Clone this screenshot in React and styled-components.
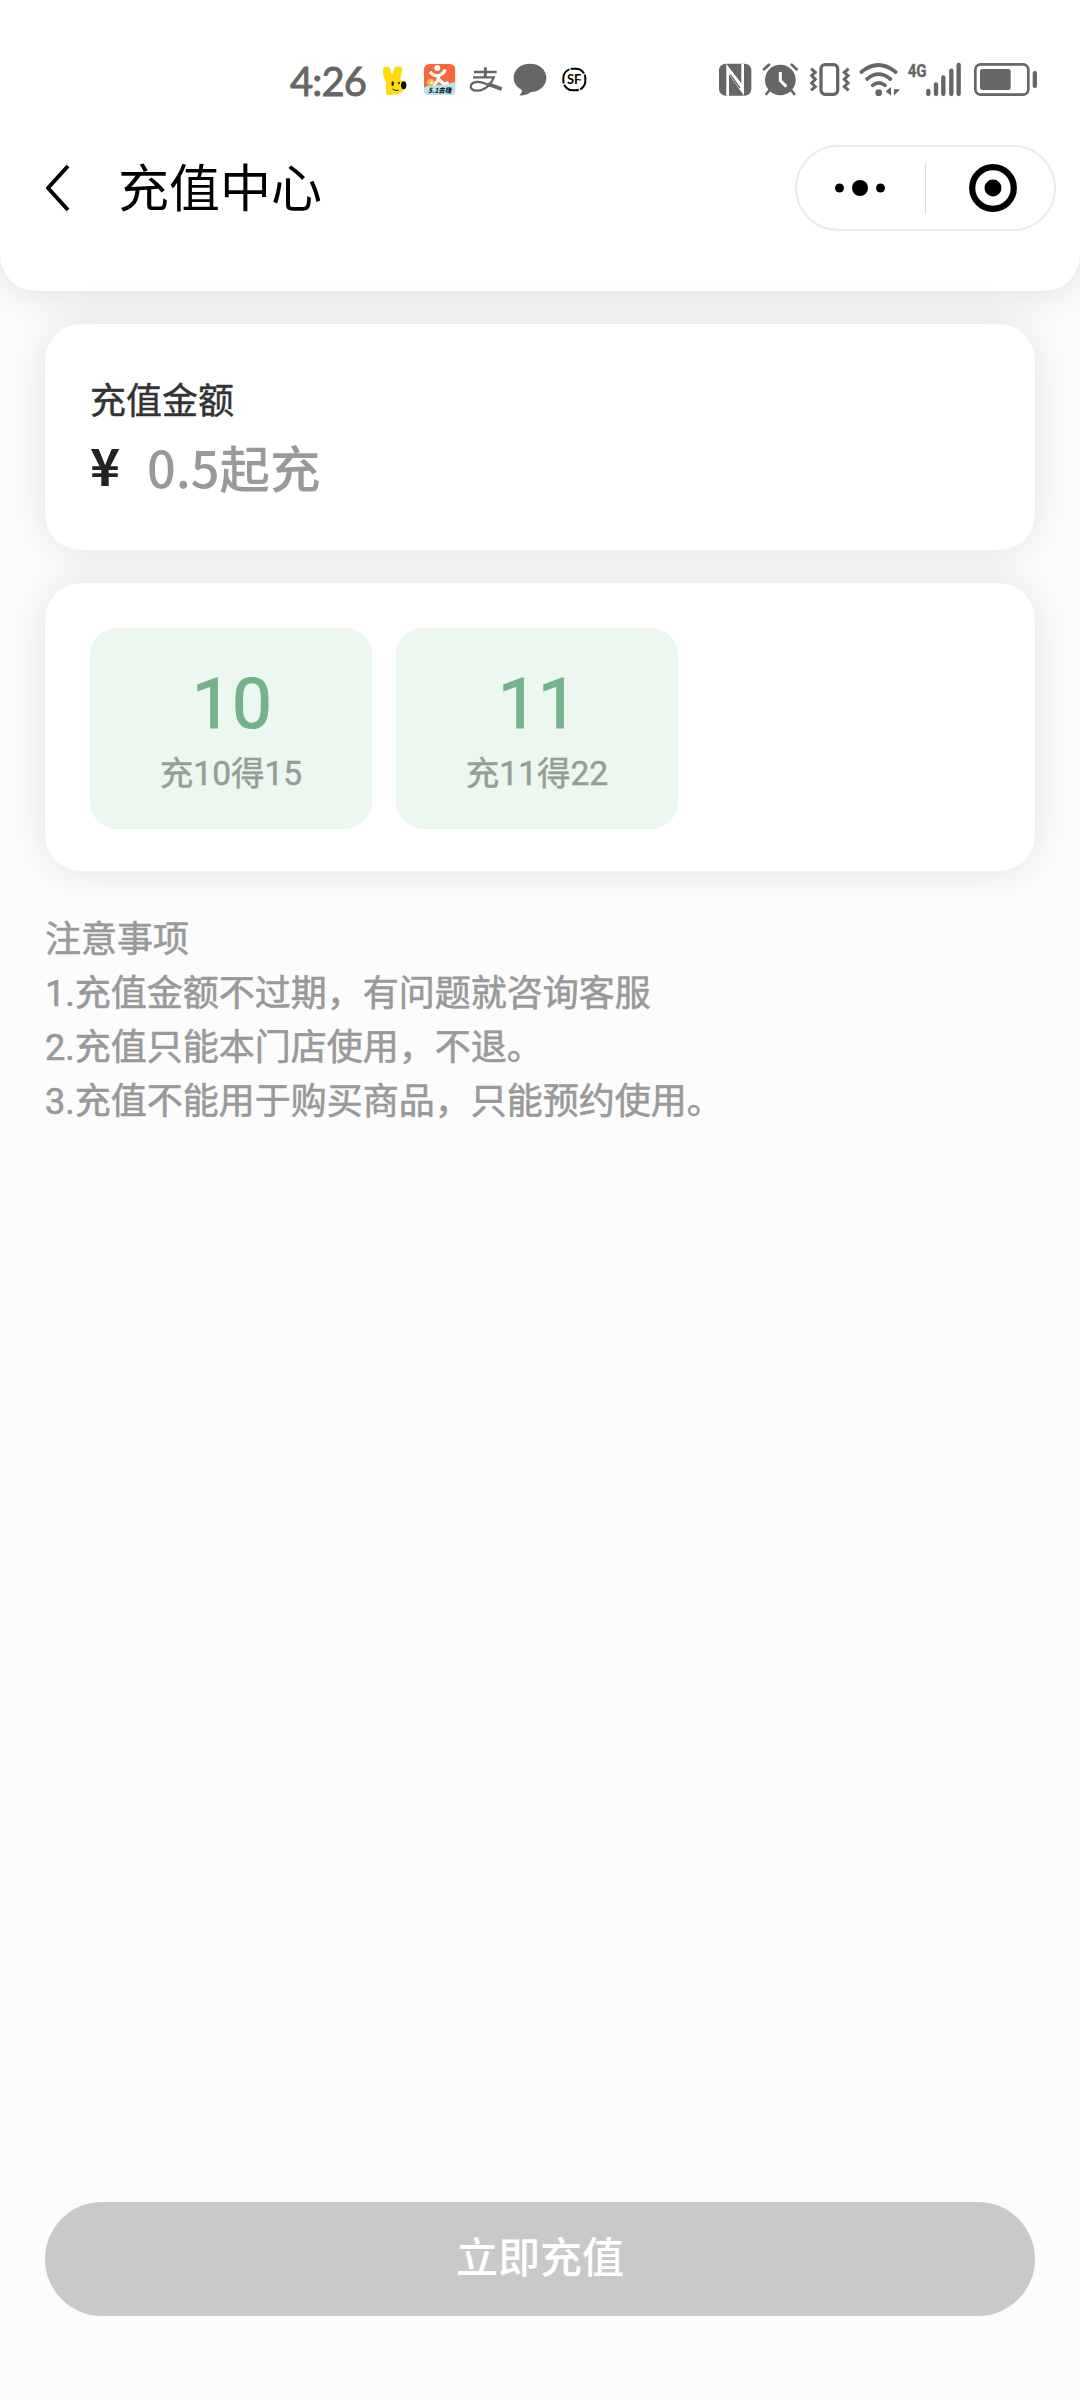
import React from 'react';
import styled, { createGlobalStyle } from 'styled-components';

const GlobalStyle = createGlobalStyle`
  * {
    box-sizing: border-box;
  }

  body {
    margin: 0;
    background: #fcfcfc;
    font-family: 'Noto Sans CJK SC', sans-serif;
  }
`;

const Page = styled.div`
  display: flex;
  flex-direction: column;
  width: 1080px;
  height: 2400px;
  overflow: hidden;
`;

const Header = styled.header`
  height: 291px;
  flex-shrink: 0;
  background: #fff;
  border-radius: 0 0 36px 36px;
  box-shadow: 0 0 45px rgba(0, 0, 0, 0.13);
`;

const StatusBar = styled.div`
  display: flex;
  align-items: flex-start;
  height: 145px;
  padding: 62px 42px 0 290px;
`;

const Time = styled.span`
  width: 92px;
  font-family: Lato, sans-serif;
  font-size: 40px;
  line-height: 38px;
  letter-spacing: -0.9px;
  color: #666;
  -webkit-text-stroke: 0.9px #666;
`;

const StatusIcon = styled.svg`
  flex-shrink: 0;
  height: 34px;
  overflow: visible;
`;

const NavBar = styled.div`
  display: flex;
  align-items: center;
  height: 86px;
  padding: 0 24px 0 42px;
`;

const Title = styled.h1`
  margin: 0 auto 0 44px;
  padding-bottom: 7px;
  font-size: 51px;
  line-height: 72px;
  font-weight: 400;
  color: #000;
`;

const Capsule = styled.div`
  display: flex;
  align-items: center;
  width: 261px;
  height: 86px;
  border: 2px solid #ebebeb;
  border-radius: 43px;
`;

const CapsuleButton = styled.button`
  display: flex;
  flex: ${(props) => props.$width ? `0 0 ${props.$width}px` : 1};
  align-items: center;
  justify-content: center;
  padding: ${(props) => props.$padding || 0};
  border: 0;
  background: none;
`;

const Divider = styled.span`
  width: 1px;
  height: 51px;
  background: #dcdcdc;
`;

const Main = styled.main`
  display: flex;
  flex: 1;
  flex-direction: column;
  padding: 33px 45px 84px;
`;

const Card = styled.section`
  height: ${(props) => props.$height}px;
  margin-bottom: 33px;
  padding: 45px;
  background: #fff;
  border-radius: 36px;
  box-shadow: 0 0 45px rgba(0, 0, 0, 0.1);
`;

const Label = styled.div`
  padding-top: 2px;
  font-size: 36px;
  line-height: 54px;
  font-weight: 400;
  color: #333;
  -webkit-text-stroke: 0.5px #333;
`;

const AmountRow = styled.div`
  display: flex;
  align-items: center;
  height: 82px;
`;

const Currency = styled.span`
  width: 57px;
  padding-bottom: 5px;
  font-size: 51px;
  line-height: 72px;
  font-weight: 700;
  color: #222;
`;

const Placeholder = styled.span`
  font-size: 50.5px;
  line-height: 72px;
  font-weight: 500;
  color: #999;
`;

const Options = styled.div`
  display: flex;
  gap: 24px;
`;

const Option = styled.div`
  display: flex;
  flex-direction: column;
  align-items: center;
  width: 282px;
  height: 201px;
  padding-top: 37px;
  background: #ecf7f0;
  border-radius: 27px;
  font-family: Roboto, 'Noto Sans CJK SC', sans-serif;
`;

const OptionValue = styled.span`
  padding-left: 2px;
  font-size: 71px;
  line-height: 78px;
  font-weight: 400;
  color: #74b28b;
  -webkit-text-stroke: 1.2px #74b28b;
`;

const OptionHint = styled.span`
  padding-top: 7px;
  font-size: 33.5px;
  line-height: 48px;
  font-weight: 400;
  color: #949e97;
  -webkit-text-stroke: 0.5px #949e97;
`;

const Notes = styled.div`
  padding-top: 9px;
  font-family: Roboto, 'Noto Sans CJK SC', sans-serif;
  font-size: 36px;
  line-height: 54px;
  font-weight: 400;
  color: #999;
  -webkit-text-stroke: 0.6px #999;
`;

const SubmitButton = styled.button`
  height: 114px;
  margin-top: auto;
  padding: 0 0 9px;
  border: 0;
  border-radius: 57px;
  background: #c9c9c9;
  color: #fff;
  font-family: inherit;
  font-size: 42px;
  font-weight: 500;
`;

const options = [
  { value: 10, hint: '充10得15' },
  { value: 11, hint: '充11得22' },
];

const notes = [
  '注意事项',
  '1.充值金额不过期，有问题就咨询客服',
  '2.充值只能本门店使用，不退。',
  '3.充值不能用于购买商品，只能预约使用。',
];

const RabbitIcon = () => (
  <StatusIcon width="25" viewBox="336 66 75 102">
    <path
      d="M349 165 L347 124 C342 112 336 96 340 86 C344 78 356 77 361 86 L366 104 L373 86 C377 76 397 76 397 88 L391 119 C398 122 405 132 404 145 C401 158 380 166 349 165Z"
      fill="#fddc0b"
    />
    <ellipse cx="401" cy="136" rx="8" ry="12" fill="#111" />
    <ellipse cx="368" cy="131" rx="3.5" ry="7" fill="#111" />
    <ellipse cx="387" cy="129" rx="2.5" ry="4" fill="#111" />
    <path d="M368 147 Q376 154 385 151" fill="none" stroke="#111" strokeWidth="3" />
  </StatusIcon>
);

const ReviewIcon = () => (
  <StatusIcon width="33" viewBox="459 66 99 102">
    <defs>
      <clipPath id="review">
        <rect x="462" y="72" width="94" height="93" rx="16" />
      </clipPath>
    </defs>
    <g clipPath="url(#review)">
      <rect x="462" y="72" width="94" height="93" fill="#f4683c" />
      <circle cx="502" cy="84" r="9" fill="#fff" />
      <path
        d="M480 95 Q490 108 505 107 Q519 104 526 88 M506 106 L504 121 L489 137 M507 119 L522 132 L536 128"
        fill="none"
        stroke="#fff"
        strokeWidth="10"
        strokeLinejoin="round"
      />
      <path d="M462 143 Q475 134 490 138 Q510 131 530 136 Q545 123 556 128 V165 H462Z" fill="#b9e3ed" />
      <circle cx="482" cy="127" r="11" fill="#f2bd55" />
      <circle cx="486" cy="128" r="4" fill="#fff0a0" />
      <text x="475" y="158" fontSize="21" fontWeight="900" fontStyle="italic" textLength="68" lengthAdjust="spacingAndGlyphs" fill="#12261c">
        5.1去嗨
      </text>
    </g>
  </StatusIcon>
);

const PayIcon = () => (
  <StatusIcon width="34" viewBox="597 66 102 102" fill="none" stroke="#666">
    <path d="M612 96 H680 M609 112 H675" strokeWidth="7" />
    <path d="M646 82 V112" strokeWidth="9" />
    <path d="M671 112 C664 132 646 151 622 152 C606 152 600 145 603 136 C607 124 628 123 646 131 L694 148" strokeWidth="7" />
    <path d="M654 132 L695 147" strokeWidth="11" />
  </StatusIcon>
);

const MessageIcon = () => (
  <StatusIcon width="34" viewBox="729 66 102 102">
    <path
      d="M780 71 C808 71 829 89 829 113 C829 138 808 155 783 156 C774 163 762 167 748 166 C754 160 757 154 755 149 C740 142 731 128 731 113 C731 89 752 71 780 71Z"
      fill="#666"
    />
  </StatusIcon>
);

const ExpressIcon = () => (
  <StatusIcon width="25" viewBox="876 66 75 102">
    <rect x="880" y="86" width="66" height="65" rx="29" fill="none" stroke="#000" strokeWidth="6" strokeDasharray="50 4" strokeDashoffset="12" />
    <text x="891" y="133" fontFamily="Lato, sans-serif" fontSize="40" fontWeight="700" textLength="43" lengthAdjust="spacingAndGlyphs" fill="#000">
      SF
    </text>
    <circle cx="930" cy="119" r="3" fill="#d33" />
  </StatusIcon>
);

const NfcIcon = () => (
  <StatusIcon width="33" viewBox="57 66 99 102">
    <rect x="57" y="71" width="97" height="96" rx="20" fill="#666" />
    <path d="M83 167 V84 L128 154 V71" fill="none" stroke="#fff" strokeWidth="8" />
    <path d="M83 78 L126 132 V158 L83 98Z" fill="#fff" />
    <path d="M91 104 L120 144" stroke="#666" strokeWidth="4" />
  </StatusIcon>
);

const AlarmIcon = () => (
  <StatusIcon width="37" viewBox="186 66 111 102">
    <circle cx="241" cy="120" r="46" fill="#666" />
    <path d="M192 88 L207 74 M290 88 L275 74" stroke="#666" strokeWidth="8" strokeLinecap="round" />
    <path d="M208 151 L199 162 M274 151 L283 162" stroke="#666" strokeWidth="8" strokeLinecap="round" />
    <path d="M241 96 V122 L259 140" fill="none" stroke="#fff" strokeWidth="9" />
  </StatusIcon>
);

const VibrateIcon = () => (
  <StatusIcon width="41" viewBox="327 66 123 102" fill="none" stroke="#666">
    <rect x="363" y="74" width="50" height="89" rx="12" strokeWidth="10" />
    <path d="M333 86 L346 97 L335 107 L346 118 L335 129 L346 140 L333 151" strokeWidth="9" />
    <path d="M446 86 L433 97 L444 107 L433 118 L444 129 L433 140 L446 151" strokeWidth="9" />
  </StatusIcon>
);

const WifiIcon = () => (
  <StatusIcon width="41" viewBox="477 66 123 102">
    <g fill="none" stroke="#666" strokeWidth="11" strokeLinecap="round">
      <path d="M484 96 Q535 54 587 96" />
      <path d="M501 117 Q536 88 571 117" />
      <path d="M518 136 Q536 121 555 136" />
    </g>
    <circle cx="536" cy="158" r="10" fill="#666" />
    <path d="M573 141 V167 L557 154Z M582 148 H600 L582 167Z" fill="#666" />
  </StatusIcon>
);

const SignalIcon = () => (
  <StatusIcon width="55" viewBox="621 66 165 102">
    <text x="623" y="112" fontFamily="Roboto, sans-serif" fontSize="57" fontWeight="700" textLength="57" lengthAdjust="spacingAndGlyphs" fill="#666" stroke="#666">
      4G
    </text>
    <path d="M685 153 V162 M708 133 V162 M730 112 V162 M754 92 V162 M776 75 V162" stroke="#666" strokeWidth="13" strokeLinecap="round" />
  </StatusIcon>
);

const BatteryIcon = () => (
  <StatusIcon width="65" viewBox="819 66 195 102">
    <rect x="826" y="73" width="159" height="91" rx="16" fill="none" stroke="#666" strokeWidth="8" />
    <rect x="840" y="87" width="92" height="63" rx="7" fill="#666" />
    <rect x="998" y="93" width="13" height="51" rx="6" fill="#666" />
  </StatusIcon>
);

// empty space between the notification icons and the system icons
const Spacer = styled.span`
  flex: 1;
`;

const Slot = styled.span`
  display: flex;
  margin-left: ${(props) => props.$gap || 0}px;
`;

const App = () => {
  return (
    <>
      <GlobalStyle />
      <Page>
        <Header>
          <StatusBar>
            <Time>4:26</Time>
            <RabbitIcon />
            <Slot $gap={16}><ReviewIcon /></Slot>
            <Slot $gap={13}><PayIcon /></Slot>
            <Slot $gap={10}><MessageIcon /></Slot>
            <Slot $gap={15}><ExpressIcon /></Slot>
            <Spacer />
            <NfcIcon />
            <Slot $gap={10}><AlarmIcon /></Slot>
            <Slot $gap={10}><VibrateIcon /></Slot>
            <Slot $gap={9}><WifiIcon /></Slot>
            <Slot $gap={7}><SignalIcon /></Slot>
            <Slot $gap={11}><BatteryIcon /></Slot>
          </StatusBar>
          <NavBar>
            <svg width="32" height="52" viewBox="0 0 32 52" fill="none" stroke="#000" strokeWidth="4" strokeLinejoin="round">
              <path d="M26 4 L6 26 L26 48" />
            </svg>
            <Title>充值中心</Title>
            <Capsule>
              <CapsuleButton $width={128} $padding="0 2px 0 0">
                <svg width="52" height="18" viewBox="0 0 52 18">
                  <circle cx="5.5" cy="9" r="4.5" />
                  <circle cx="26" cy="9" r="8" />
                  <circle cx="46.5" cy="9" r="4.5" />
                </svg>
              </CapsuleButton>
              <Divider />
              <CapsuleButton $padding="0 0 0 6px">
                <svg width="48" height="48" viewBox="0 0 48 48">
                  <circle cx="24" cy="24" r="20.8" fill="none" stroke="#000" strokeWidth="6.2" />
                  <circle cx="24" cy="24" r="8.5" />
                </svg>
              </CapsuleButton>
            </Capsule>
          </NavBar>
        </Header>
        <Main>
          <Card $height={226}>
            <Label>充值金额</Label>
            <AmountRow>
              <Currency>¥</Currency>
              <Placeholder>0.5起充</Placeholder>
            </AmountRow>
          </Card>
          <Card $height={288}>
            <Options>
              {options.map((option) => (
                <Option key={option.value}>
                  <OptionValue>{option.value}</OptionValue>
                  <OptionHint>{option.hint}</OptionHint>
                </Option>
              ))}
            </Options>
          </Card>
          <Notes>
            {notes.map((note) => (
              <div key={note}>{note}</div>
            ))}
          </Notes>
          <SubmitButton>立即充值</SubmitButton>
        </Main>
      </Page>
    </>
  );
};

export default App;
